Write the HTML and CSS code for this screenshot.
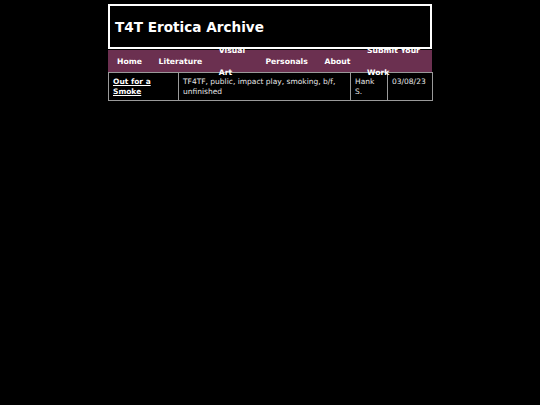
FILE: index.html
```html
<!DOCTYPE html>
<html>
<head>
<meta charset="utf-8">
<link rel="stylesheet" href="styles.css">
</head>
<body>
<div class="page">
  <header class="site-header">
    <h1 class="site-title">T4T Erotica Archive</h1>
  </header>
  <nav class="site-nav">
    <ul class="nav-list">
      <li class="nav-item nav-home">Home</li>
      <li class="nav-item nav-lit">Literature</li>
      <li class="nav-item nav-art">Visual Art</li>
      <li class="nav-item nav-pers">Personals</li>
      <li class="nav-item nav-about">About</li>
      <li class="nav-item nav-submit">Submit Your Work</li>
    </ul>
  </nav>
  <table class="works">
    <colgroup>
      <col class="c-title">
      <col class="c-tags">
      <col class="c-author">
      <col class="c-date">
    </colgroup>
    <tr>
      <td><a class="work-link" href="#">Out for a Smoke</a></td>
      <td>TF4TF, public, impact play, smoking, b/f, unfinished</td>
      <td>Hank S.</td>
      <td>03/08/23</td>
    </tr>
  </table>
</div>
</body>
</html>
```
FILE: styles.css
```css
html, body {
  margin: 0;
  padding: 0;
  background: #000;
  color: #fff;
  font-family: "DejaVu Sans", Verdana, sans-serif;
}
.page {
  width: 324px;
  margin: 4px auto 0;
}
.site-header {
  border: 2px solid #fff;
  height: 40px;
  display: flex;
  align-items: center;
  padding: 1px 0 0 5px;
  box-sizing: content-box;
  width: 315px;
}
.site-title {
  margin: 0;
  font-size: 13.6px;
  font-weight: bold;
  color: #fff;
}
.site-nav {
  background: #6b3050;
  height: 22px;
  margin-top: 1px;
}
.nav-list {
  list-style: none;
  margin: 0;
  padding: 2px 8px 0 9px;
  box-sizing: border-box;
  height: 22px;
  display: flex;
  align-items: center;
  justify-content: space-between;
}
.nav-item {
  font-size: 7.7px;
  font-weight: bold;
  line-height: 22px;
  color: #fff;
}
.nav-art { width: 30px; }
.nav-submit { width: 57px; }
.works {
  width: 324px;
  border-collapse: collapse;
  table-layout: fixed;
  font-size: 7.5px;
  line-height: 10px;
}
.c-title { width: 70px; }
.c-tags { width: 172px; }
.c-author { width: 37px; }
.c-date { width: 45px; }
.works td {
  border: 1px solid #9a9a9a;
  padding: 4px 4px 3px;
  vertical-align: top;
  color: #e6e6e6;
}
.work-link {
  color: #fff;
  font-weight: bold;
}
```
